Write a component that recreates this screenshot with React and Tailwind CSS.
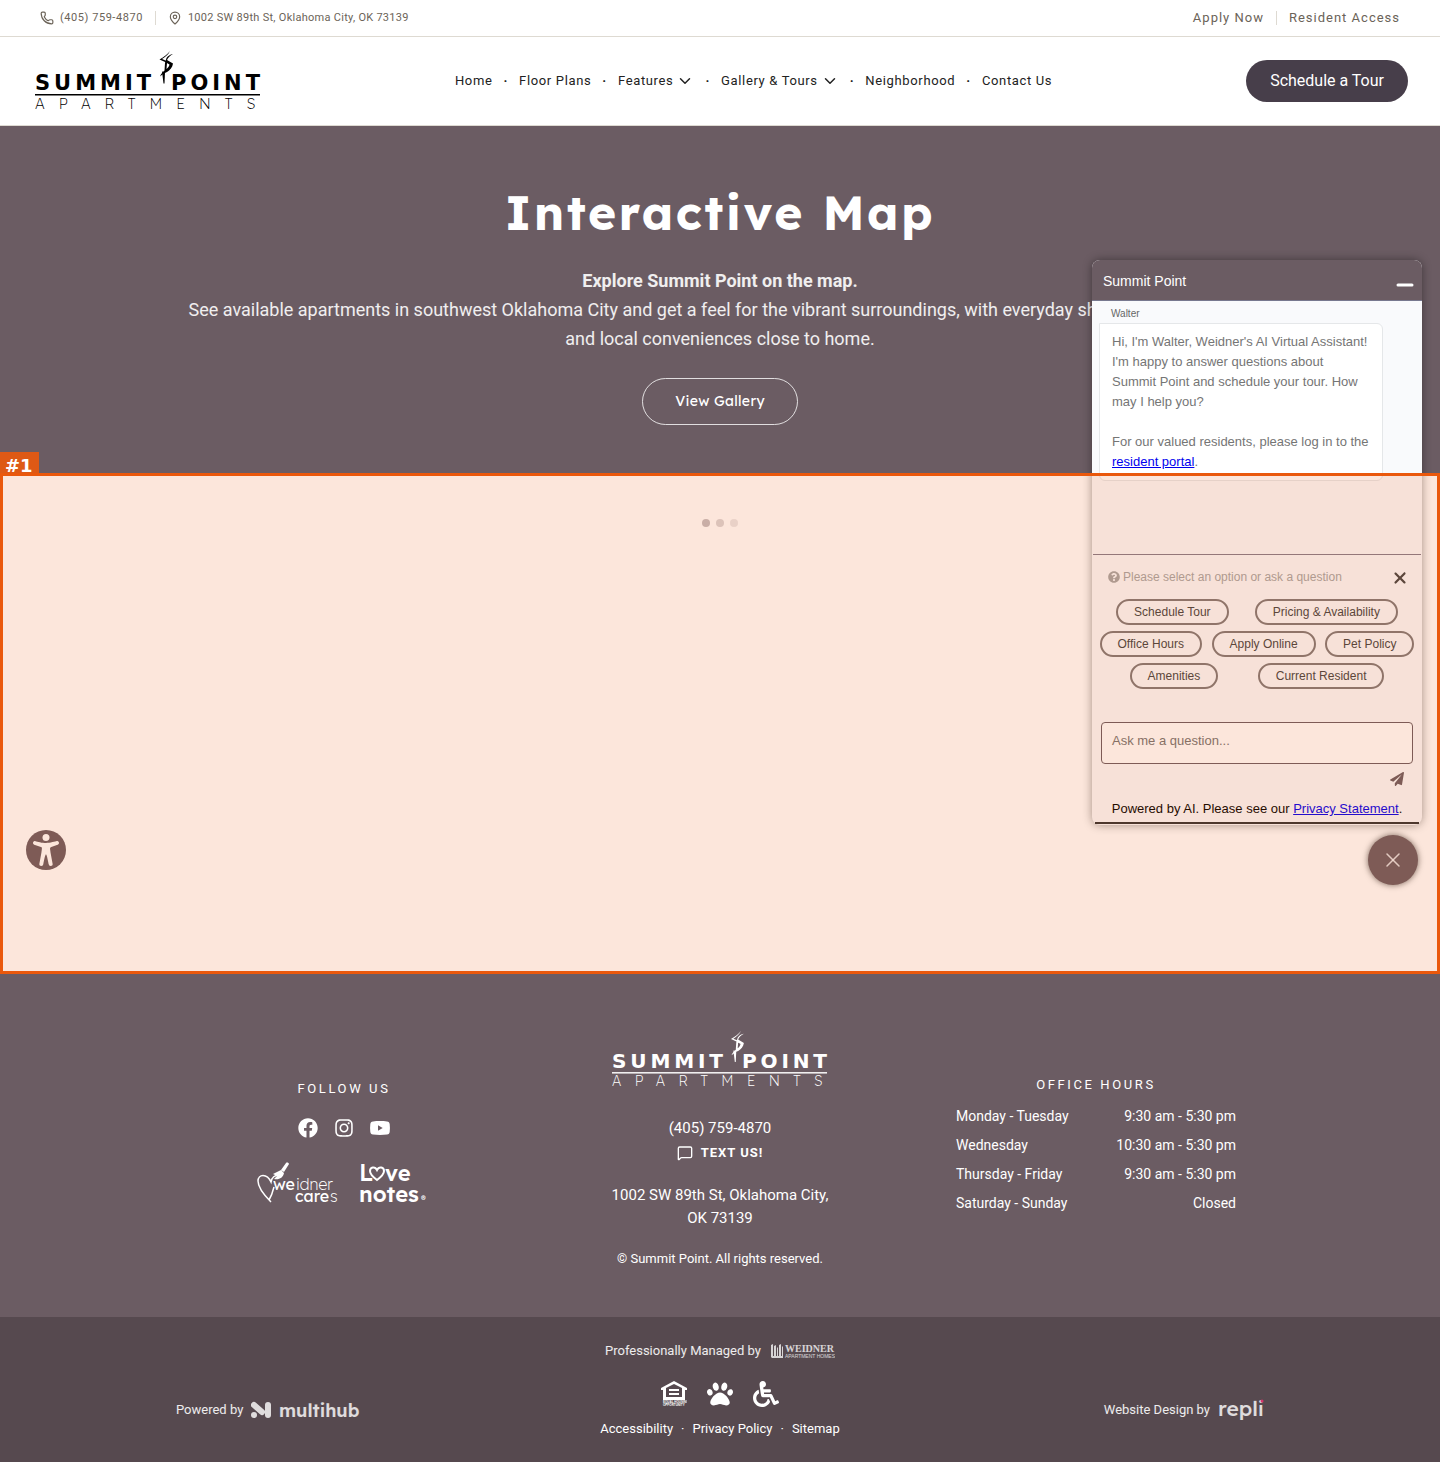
import React, { useState } from 'react';
import { ChevronDown, MapPin, MessageSquare, Minus, Phone, X } from 'lucide-react';
import { FaFacebook, FaInstagram, FaPaperPlane, FaPaw, FaQuestionCircle, FaWheelchair } from 'react-icons/fa';
import { FaXmark } from 'react-icons/fa6';
import { IoAccessibility } from 'react-icons/io5';

const navItems = [
  { label: 'Home' },
  { label: 'Floor Plans' },
  { label: 'Features', menu: true },
  { label: 'Gallery & Tours', menu: true },
  { label: 'Neighborhood' },
  { label: 'Contact Us' },
];

const officeHours = [
  { days: 'Monday - Tuesday', hours: '9:30 am - 5:30 pm' },
  { days: 'Wednesday', hours: '10:30 am - 5:30 pm' },
  { days: 'Thursday - Friday', hours: '9:30 am - 5:30 pm' },
  { days: 'Saturday - Sunday', hours: 'Closed' },
];

const quickReplies = [
  'Schedule Tour',
  'Pricing & Availability',
  'Office Hours',
  'Apply Online',
  'Pet Policy',
  'Amenities',
  'Current Resident',
];

const SummitLogo = ({ className }) => (
  <svg viewBox="0 0 226 60" className={className} role="img" aria-label="Summit Point Apartments" fill="currentColor">
    <g fontWeight="700" fontSize="21" fontFamily="DejaVu Sans, sans-serif">
      <text x="0" y="39" letterSpacing="4">SUMMI<tspan letterSpacing="0">T</tspan></text>
      <text x="136" y="39" letterSpacing="4">POIN<tspan letterSpacing="0">T</tspan></text>
    </g>
    <text x="0" y="58" fontSize="15" fontWeight="200" letterSpacing="14" fontFamily="Lexend, DejaVu Sans, sans-serif">
      APARTMENT<tspan letterSpacing="0">S</tspan>
    </text>
    <rect x="0" y="43" width="225" height="1.5" />
    <g transform="translate(0 -1)">
      <path d="M135 1c-2 4-5 6-8 8l7 3-.5 1.500-9-4c5-3 7.500-5 10.500-8.500z" />
      <path d="M138 4c-3 1.500-5 3.500-6 6l6 3.500c-.5 4-3 6.500-6 8.500-3 1-5 3-7 4.500 1-3 3-4.500 4.500-6l.5-7.500 1.500-5C133 6 135 4.500 138 4zm-6 9l-.5 6c1.500-1.200 2.500-2.500 3-4.500z" fillRule="evenodd" />
      <path d="M127 21.500l3 .5-.5 11.500h-1z" />
    </g>
  </svg>
);

const YoutubeIcon = () => (
  <svg viewBox="0 0 20 14" className="w-5" fill="currentColor" aria-hidden="true">
    <path fillRule="evenodd" d="M3 .4C7 0 13 0 17 .4c1.700.2 2.600 1.200 2.700 2.800.3 2.500.3 5.100 0 7.600-.1 1.600-1 2.600-2.700 2.800-4 .4-10 .4-14 0C1.300 13.400.4 12.400.3 10.800 0 8.300 0 5.700.3 3.200.4 1.600 1.300.6 3 .4zM8 4.300v5.400L12.700 7z" />
  </svg>
);

const WeidnerCaresLogo = () => (
  <svg viewBox="0 0 82 42" className="w-[82px]" fill="currentColor" role="img" aria-label="Weidner Cares">
    <path d="M14 40C6 32 1 25 1 19 1 12 10 11 14 20c1-5 4-7 8-7M12 38c3-5 4-9 5-13" fill="none" stroke="currentColor" strokeWidth="1.5" />
    <path d="M16 12l8-4 3 3c-1 5-5 7-10 6l3-3zM24 8l5-7c1-1 3 0 3 1l-5 8z" />
    <g fontFamily="Lexend, Lato, sans-serif" fontSize="16">
      <text x="16" y="28" fontWeight="400">we</text>
      <text x="39" y="28" fontWeight="200">idner</text>
      <text x="38" y="40" fontWeight="400">care</text>
      <text x="73" y="40" fontWeight="200">s</text>
    </g>
  </svg>
);

const LoveNotesLogo = () => (
  <svg viewBox="0 0 72 42" className="w-[72px]" fill="currentColor" role="img" aria-label="Love Notes">
    <g fontFamily="Lexend, Lato, sans-serif" fontWeight="600">
      <text x="0" y="19" fontSize="24" fontWeight="500">L</text>
      <text x="26" y="19" fontSize="22">ve</text>
      <text x="0" y="40" fontSize="22">notes</text>
      <text x="62" y="40" fontSize="9" fontWeight="400">®</text>
    </g>
    <path d="M18 18c-4-3-7-6-7-9 0-4 5-5 7-1 2-4 7-3 7 1 0 3-3 6-7 9z" fill="none" stroke="currentColor" strokeWidth="2" />
  </svg>
);

const WeidnerLogo = () => (
  <svg viewBox="0 0 64 16" className="w-[64px] opacity-85" fill="currentColor" role="img" aria-label="Weidner Apartment Homes">
    <path d="M0 2l2-1v12h1V3l2-1v11h1V5l1-1v9h1V2l2-1v12h1V4l1-1v12H1l-1-1z" />
    <text x="14" y="9" fontSize="10" fontWeight="700" fontFamily="Liberation Serif, serif">WEIDNER</text>
    <text x="14" y="15" fontSize="5" fontFamily="Liberation Sans, sans-serif">APARTMENT HOMES</text>
  </svg>
);

const MultihubLogo = () => (
  <svg viewBox="0 0 110 18" className="w-[110px] opacity-90" fill="currentColor" role="img" aria-label="multihub">
    <path d="M3 4l8 7" stroke="currentColor" strokeWidth="6" strokeLinecap="round" />
    <circle cx="3" cy="14" r="3" />
    <rect x="14" y="1" width="6" height="16" rx="3" />
    <text x="28" y="16" fontSize="18" fontWeight="600" fontFamily="Lexend, Lato, sans-serif">multihub</text>
  </svg>
);

const RepliLogo = () => (
  <svg viewBox="0 0 46 24" className="w-[46px]" fill="currentColor" role="img" aria-label="repli">
    <text x="0" y="18" fontSize="21" fontWeight="500" fontFamily="Lexend, Lato, sans-serif" opacity="0.9">repli</text>
    <circle cx="44" cy="3" r="1.5" fill="#d6336c" />
  </svg>
);

const EqualHousingIcon = () => (
  <svg viewBox="0 0 26 26" className="w-[26px]" fill="currentColor" role="img" aria-label="Equal housing opportunity">
    <path fillRule="evenodd" d="M13 0l13 7v2h-2v10H2V9H0V7zM13 3L5 7v9h16V7zM8 8h10v2H8zM8 12h10v2H8z" />
    <text x="2" y="22" fontSize="3" fontWeight="700" fontFamily="Liberation Sans, sans-serif">EQUAL HOUSING</text>
    <text x="2" y="25" fontSize="3" fontWeight="700" fontFamily="Liberation Sans, sans-serif">OPPORTUNITY</text>
  </svg>
);

const TopBar = () => (
  <div className="flex h-[37px] items-center justify-between border-b border-[#dedad2] px-10 text-[#6b6358]">
    <div className="flex items-center text-[11px] tracking-wide">
      <a href="#call" className="flex items-center gap-[6px] tracking-wider">
        <Phone className="size-[14px]" strokeWidth={2} />
        (405) 759-4870
      </a>
      <span className="mx-3 h-[14px] w-px bg-[#dedad2]" />
      <a href="#directions" className="flex items-center gap-[6px]">
        <MapPin className="size-[14px]" strokeWidth={2} />
        1002 SW 89th St, Oklahoma City, OK 73139
      </a>
    </div>
    <div className="flex items-center text-[13px] tracking-[1px]">
      <a href="#apply">Apply Now</a>
      <span className="mx-3 h-[14px] w-px bg-[#dedad2]" />
      <a href="#residents">Resident Access</a>
    </div>
  </div>
);

const Header = () => (
  <header className="flex h-[89px] items-center justify-between border-b border-[#dedad2] pl-[35px] pr-8">
    <a href="#home">
      <SummitLogo className="w-[226px] text-black" />
    </a>
    <nav className="flex items-center gap-[11px] text-[13px] tracking-wider text-[#222]">
      {navItems.map((item, i) => (
        <React.Fragment key={item.label}>
          {i > 0 && <span className="font-bold">·</span>}
          <a href="#nav" className="flex items-center gap-[3px]">
            {item.label}
            {item.menu && <ChevronDown className="size-[18px]" />}
          </a>
        </React.Fragment>
      ))}
    </nav>
    <button type="button" className="h-[42px] rounded-full bg-[#473e4a] px-6 text-base text-white">
      Schedule a Tour
    </button>
  </header>
);

const Hero = () => (
  <section className="flex h-[347px] flex-col items-center bg-[#6b5c63] pt-[51px] text-center">
    <h1 className="font-[Lexend,Inter,sans-serif] text-5xl font-bold leading-[70px] tracking-wider text-white">
      Interactive Map
    </h1>
    <div className="mt-[19px] max-w-[1080px] text-lg leading-[29px] text-white/90">
      <p className="font-bold">Explore Summit Point on the map.</p>
      <p>
        See available apartments in southwest Oklahoma City and get a feel for the vibrant surroundings, with everyday shopping, dining, arts, and local conveniences close to home.
      </p>
    </div>
    <a
      href="#gallery"
      className="mt-[25px] flex h-[47px] items-center rounded-full border border-white/80 px-8 pb-[2px] font-[Lexend,Inter,sans-serif] text-sm tracking-wide text-white"
    >
      View Gallery
    </a>
  </section>
);

const MapSection = () => (
  <section className="relative h-[501px] bg-white">
    <div className="flex justify-center gap-[6px] pt-[46px]">
      <span className="size-2 rounded-full bg-[#6b5c63]/40" />
      <span className="size-2 rounded-full bg-[#6b5c63]/25" />
      <span className="size-2 rounded-full bg-[#6b5c63]/15" />
    </div>
    <span className="absolute -top-[21px] left-0 z-30 h-[21px] bg-[#de5915] pl-[5px] pr-[6px] font-['DejaVu_Sans',sans-serif] text-lg font-bold leading-[27px] text-white">
      #1
    </span>
    <div className="pointer-events-none absolute inset-0 z-40 border-3 border-[#ea580c] bg-[#ea580c]/15" />
  </section>
);

const ChatWidget = () => {
  const [message, setMessage] = useState('');

  return (
    <>
      <div className="absolute right-[18px] top-[260px] z-20 w-[330px] rounded-lg border border-transparent bg-[#f9fafc] font-['Liberation_Sans',Arial,sans-serif] shadow-[0_0_10px_rgba(0,0,0,0.4)]">
        <div className="-mx-px -mt-px flex h-[41px] items-center justify-between rounded-t-lg border-b border-[#77788f] bg-[#6b5c63] pl-[11px] pr-[5px] pt-px text-white">
          <span className="text-sm">Summit Point</span>
          <button type="button" aria-label="Minimize chat" className="pt-2">
            <Minus className="size-6" strokeWidth={3} />
          </button>
        </div>
        <div className="h-[253px] px-[6px] pt-[5px]">
          <p className="pl-3 text-[10px] leading-[15px] text-[#666]">Walter</p>
          <div className="mt-[2px] w-[284px] rounded-md rounded-tl-none border border-[#e5e7e9] bg-white px-3 py-2 text-[13px] leading-5 text-[#757575]">
            <p>Hi, I'm Walter, Weidner's AI Virtual Assistant! I'm happy to answer questions about Summit Point and schedule your tour. How may I help you?</p>
            <p className="mt-5">
              For our valued residents, please log in to the{' '}
              <a href="#portal" className="text-[#0000ee] underline">resident portal</a>.
            </p>
          </div>
        </div>
        <div className="border-t border-[#857d8c]">
          <div className="flex h-[41px] items-center justify-between pl-[15px] pr-3 pt-1 text-xs text-[#a6a6a6]">
            <span className="flex items-center gap-[3px] pb-[2px]">
              <FaQuestionCircle className="size-3" />
              Please select an option or ask a question
            </span>
            <button type="button" aria-label="Hide options" className="text-[#444]">
              <FaXmark className="size-[18px]" />
            </button>
          </div>
          <div className="flex flex-wrap justify-evenly">
            {quickReplies.map((reply) => (
              <button
                key={reply}
                type="button"
                className="m-[3px] h-[26px] rounded-full border-2 border-[#807a7a] px-4 text-xs text-[#444]"
              >
                {reply}
              </button>
            ))}
          </div>
          <div className="px-2 pt-[30px]">
            <textarea
              aria-label="Ask me a question"
              value={message}
              onChange={(e) => setMessage(e.target.value)}
              placeholder="Ask me a question..."
              className="block h-[42px] w-full resize-none rounded-sm border border-[#6b5c63] bg-white px-[10px] py-2 text-[13px] leading-5 placeholder:text-[#757575]"
            />
          </div>
          <div className="flex justify-end pr-[17px] pt-2">
            <button type="button" aria-label="Send message" className="text-[#6b5c63]">
              <FaPaperPlane className="size-[14px]" />
            </button>
          </div>
          <p className="mx-[2px] mt-3 h-[26px] border-b-2 border-[#333] pt-px text-center text-[13px] leading-5 text-black">
            Powered by AI. Please see our{' '}
            <a href="#privacy" className="text-[#0000ee] underline">Privacy Statement</a>.
          </p>
        </div>
      </div>
      <button
        type="button"
        aria-label="Close chat"
        className="absolute right-[22px] top-[835px] z-20 flex size-[50px] items-center justify-center rounded-full bg-[#6b5c63] text-white/80 shadow-[0_0_6px_rgba(0,0,0,0.6)]"
      >
        <X className="size-6" strokeWidth={1.5} />
      </button>
    </>
  );
};

const Footer = () => (
  <footer className="text-white">
    <div className="bg-[#6b5c63] px-4">
      <div className="mx-auto grid min-h-[343px] max-w-[1128px] grid-cols-3 pt-[57px]">
        <div className="flex flex-col items-center pt-12">
          <h2 className="text-[13px] leading-5 tracking-[0.2em]">FOLLOW US</h2>
          <div className="mt-[19px] flex items-center gap-4">
            <a href="#facebook" aria-label="Facebook"><FaFacebook className="size-5" /></a>
            <a href="#instagram" aria-label="Instagram"><FaInstagram className="size-5" /></a>
            <a href="#youtube" aria-label="YouTube"><YoutubeIcon /></a>
          </div>
          <div className="mt-6 flex gap-5">
            <WeidnerCaresLogo />
            <LoveNotesLogo />
          </div>
        </div>
        <div className="flex flex-col items-center text-center text-[15px] leading-[23px]">
          <SummitLogo className="w-[216px]" />
          <a href="#call" className="mt-[29px]">(405) 759-4870</a>
          <a href="#text" className="mt-px flex items-center gap-2 text-[13px] font-bold tracking-[1px]">
            <MessageSquare className="size-4" />
            TEXT US!
          </a>
          <address className="mt-5 max-w-[220px] not-italic">1002 SW 89th St, Oklahoma City, OK 73139</address>
          <p className="mt-[17px] text-[13px]">© Summit Point. All rights reserved.</p>
        </div>
        <div className="flex flex-col items-center pt-11">
          <h2 className="text-[13px] leading-5 tracking-[0.2em]">OFFICE HOURS</h2>
          <table className="mt-[7px] w-[280px] text-sm leading-[29px]">
            <tbody>
              {officeHours.map((row) => (
                <tr key={row.days}>
                  <th scope="row" className="text-left font-normal">{row.days}</th>
                  <td className="text-right">{row.hours}</td>
                </tr>
              ))}
            </tbody>
          </table>
        </div>
      </div>
    </div>
    <div className="bg-[#56494f] px-4 text-[13px]">
      <div className="mx-auto grid min-h-[145px] max-w-[1088px] grid-cols-3 items-end pb-6">
        <div className="mb-4 flex h-6 items-center gap-2 text-white/90">
          Powered by <MultihubLogo />
        </div>
        <div className="flex flex-col items-center">
          <div className="flex items-center gap-[10px] text-white/90">
            Professionally Managed by <WeidnerLogo />
          </div>
          <div className="mt-5 flex items-center gap-5">
            <EqualHousingIcon />
            <FaPaw className="size-[26px]" />
            <FaWheelchair className="size-[26px]" />
          </div>
          <div className="mt-3 flex gap-2">
            <a href="#accessibility">Accessibility</a>
            <span>·</span>
            <a href="#privacy">Privacy Policy</a>
            <span>·</span>
            <a href="#sitemap">Sitemap</a>
          </div>
        </div>
        <div className="mb-4 flex h-6 items-center justify-end gap-2 text-white/90">
          Website Design by <RepliLogo />
        </div>
      </div>
    </div>
  </footer>
);

const App = () => (
  <div className="relative bg-white font-[Roboto,sans-serif]">
    <TopBar />
    <Header />
    <Hero />
    <MapSection />
    <Footer />
    <ChatWidget />
    <button
      type="button"
      aria-label="Accessibility options"
      className="absolute left-[26px] top-[830px] z-20 flex size-10 items-center justify-center rounded-full bg-[#6b5c63] text-white"
    >
      <IoAccessibility className="size-8" />
    </button>
  </div>
);

export default App;
